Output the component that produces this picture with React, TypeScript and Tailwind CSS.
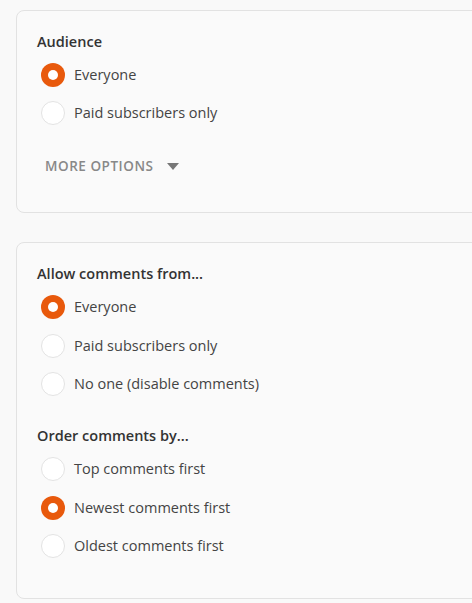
const font = { fontFamily: '"Open Sans", "Noto Sans", sans-serif' };

function Radio({ label, checked, tall }: { label: string; checked?: boolean; tall?: boolean }) {
  return (
    <div className={tall ? 'flex h-[38.5px] items-center' : 'flex h-[38px] items-center'}>
      <span
        className={
          checked
            ? 'ml-1 flex h-6 w-6 items-center justify-center rounded-full bg-[#e8590c]'
            : 'ml-1 h-6 w-6 rounded-full border border-[#e3e3e3] bg-white'
        }
      >
        {checked && <span className="h-[10px] w-[10px] rounded-full bg-white" />}
      </span>
      <span className="ml-[9px] text-[14.5px] text-[#444]">{label}</span>
    </div>
  );
}

export default function App() {
  return (
    <div className="min-h-[603px] w-[472px] overflow-hidden bg-[#f9f9f9] pl-4 pt-[10px]" style={font}>
      <div className="w-[520px] rounded-lg border border-[#e2e2e2] bg-[#fafafa] pb-[36px] pl-5 pt-[21px]">
        <h3 className="mb-[4px] text-[14.5px] font-semibold leading-5 text-[#333]">Audience</h3>
        <Radio label="Everyone" checked />
        <Radio label="Paid subscribers only" />
        <button className="mt-[24px] flex h-5 items-center pl-[8px] text-[13.5px] font-semibold tracking-[0.04em] text-[#888]">
          MORE OPTIONS
          <svg className="ml-[13px]" width="12" height="7" viewBox="0 0 12 7">
            <path d="M0 0h12L6 7z" fill="#777" />
          </svg>
        </button>
      </div>

      <div className="mt-[29px] w-[520px] rounded-lg border border-[#e2e2e2] bg-[#fafafa] pb-8 pl-5 pt-[21px]">
        <h3 className="mb-[4px] text-[14.5px] font-semibold leading-5 text-[#333]">Allow comments from...</h3>
        <Radio label="Everyone" checked tall />
        <Radio label="Paid subscribers only" tall />
        <Radio label="No one (disable comments)" tall />
        <h3 className="mb-[4px] mt-[22.5px] text-[14.5px] font-semibold leading-5 text-[#333]">Order comments by...</h3>
        <Radio label="Top comments first" tall />
        <Radio label="Newest comments first" checked tall />
        <Radio label="Oldest comments first" tall />
      </div>
    </div>
  );
}
